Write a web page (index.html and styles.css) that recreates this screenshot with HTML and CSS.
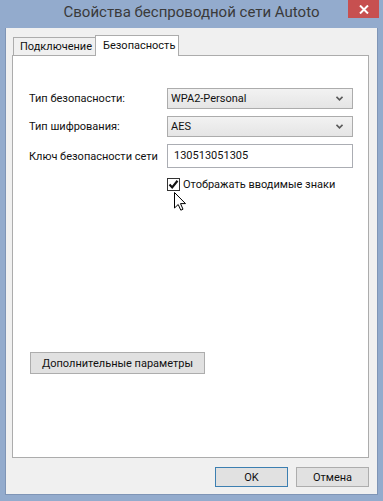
FILE: index.html
```html
<!DOCTYPE html>
<html lang="ru">
<head>
    <meta charset="UTF-8">
    <meta name="viewport" content="width=device-width, initial-scale=1.0">
    <title>Свойства беспроводной сети Autoto</title>
    <link rel="stylesheet" href="styles.css">
</head>
<body>
    <div class="window">
        <!-- Заголовок окна -->
        <div class="titlebar">
            <span class="title">Свойства беспроводной сети Autoto</span>
            <div class="close-btn">
                <svg width="10" height="9" viewBox="0 0 10 9">
                    <path d="M1 0.5 L9 8.5 M9 0.5 L1 8.5" stroke="#fff" stroke-width="2"/>
                </svg>
            </div>
        </div>

        <div class="client">
            <div class="tabs">
                <div class="tab">Подключение</div>
                <div class="tab active">Безопасность</div>
            </div>

            <div class="panel">
                <div class="form-grid">
                    <label class="field-label">Тип безопасности:</label>
                    <div class="combo">
                        <span>WPA2-Personal</span>
                        <svg class="chevron" width="7" height="5" viewBox="0 0 7 5">
                            <path d="M0.5 0.8 L3.5 3.8 L6.5 0.8" fill="none" stroke="#5a5a5a" stroke-width="1.6"/>
                        </svg>
                    </div>

                    <label class="field-label">Тип шифрования:</label>
                    <div class="combo">
                        <span>AES</span>
                        <svg class="chevron" width="7" height="5" viewBox="0 0 7 5">
                            <path d="M0.5 0.8 L3.5 3.8 L6.5 0.8" fill="none" stroke="#5a5a5a" stroke-width="1.6"/>
                        </svg>
                    </div>

                    <label class="field-label">Ключ безопасности сети</label>
                    <div class="textbox">130513051305</div>
                </div>

                <div class="check-row">
                    <span class="checkbox">
                        <svg width="11" height="11" viewBox="0 0 11 11">
                            <path d="M1.5 5.5 L4.2 8.4 L9.5 1.8" fill="none" stroke="#111" stroke-width="2.2"/>
                        </svg>
                    </span>
                    <span>Отображать вводимые знаки</span>
                    <!-- курсор мыши поверх флажка -->
                    <svg class="cursor" width="13" height="19" viewBox="0 0 13 19">
                        <path d="M0.5 0.5 L0.5 16 L4.2 12.5 L6.8 18.2 L9 17.2 L6.5 11.6 L11.5 11.6 Z" fill="#fff" stroke="#000" stroke-width="1"/>
                    </svg>
                </div>

                <div class="spacer"></div>

                <button class="btn btn-wide">Дополнительные параметры</button>
            </div>

            <div class="actions">
                <button class="btn btn-default">OK</button>
                <button class="btn">Отмена</button>
            </div>
        </div>
    </div>
</body>
</html>
```
FILE: styles.css
```css
* {
    box-sizing: border-box;
}
body {
    margin: 0;
    padding: 0;
    background: #93abcd;
    font-family: Roboto, "Noto Sans", Arial, sans-serif;
    font-size: 11px;
    color: #111;
}
.window {
    display: flex;
    flex-direction: column;
    height: 501px;
}
.titlebar {
    position: relative;
    height: 28px;
    flex-shrink: 0;
    text-align: center;
}
.title {
    display: block;
    line-height: 25px;
    font-size: 15px;
    color: #3a3a3a;
}
.close-btn {
    position: absolute;
    top: 0;
    right: 4px;
    width: 31px;
    height: 18px;
    background: #c75050;
    display: flex;
    align-items: center;
    justify-content: center;
}
.client {
    flex: 1;
    margin: 0 5px 6px 5px;
    background: #f0f0f0;
    border: 1px solid #7f95b6;
    border-top: none;
    padding: 7px 8px 0 6px;
    display: flex;
    flex-direction: column;
}
.tabs {
    display: flex;
    align-items: flex-end;
    height: 21px;
    margin-left: 1px;
    margin-bottom: -1px;
    position: relative;
    z-index: 1;
}
.tab {
    height: 18px;
    line-height: 17px;
    margin-bottom: 1px;
    padding: 0 6px;
    width: 82px;
    background: #f0f0f0;
    border: 1px solid #acacac;
    border-bottom: none;
    border-right: none;
    white-space: nowrap;
}
.tab.active {
    height: 21px;
    line-height: 19px;
    margin-bottom: 0;
    background: #fff;
    border-right: 1px solid #acacac;
    padding: 0 7px;
    width: 84px;
}
.panel {
    height: 403px;
    flex-shrink: 0;
    background: #fff;
    border: 1px solid #acacac;
    padding: 32px 16px 0 16px;
    display: flex;
    flex-direction: column;
}
.form-grid {
    display: grid;
    grid-template-columns: 138px 186px;
    grid-template-rows: 21px 21px 24px;
    row-gap: 7px;
    align-items: center;
}
.field-label {
    white-space: nowrap;
}
.combo {
    height: 21px;
    border: 1px solid #acacac;
    background: linear-gradient(#f2f2f2, #e5e5e5);
    display: flex;
    align-items: center;
    justify-content: space-between;
    padding: 0 9px 0 3px;
}
.textbox {
    height: 24px;
    line-height: 22px;
    border: 1px solid #abadb3;
    background: #fff;
    padding: 0 6px;
}
.check-row {
    position: relative;
    display: flex;
    align-items: center;
    gap: 3px;
    margin: 10px 0 0 138px;
    height: 13px;
    white-space: nowrap;
}
.checkbox {
    width: 13px;
    height: 13px;
    flex-shrink: 0;
    border: 1px solid #333;
    background: #fff;
    display: flex;
}
.cursor {
    position: absolute;
    left: 7px;
    top: 14px;
}
.spacer {
    height: 161px;
    flex-shrink: 0;
}
.btn {
    font-family: inherit;
    font-size: 11px;
    color: #111;
    background: #e1e1e1;
    border: 1px solid #adadad;
    padding: 0;
    margin: 0;
}
.btn-wide {
    width: 175px;
    height: 22px;
    margin-left: 1px;
}
.actions {
    display: flex;
    justify-content: flex-end;
    gap: 8px;
    padding-top: 9px;
}
.actions .btn {
    width: 73px;
    height: 20px;
}
.btn-default {
    border-color: #3c7fb1;
}
```
